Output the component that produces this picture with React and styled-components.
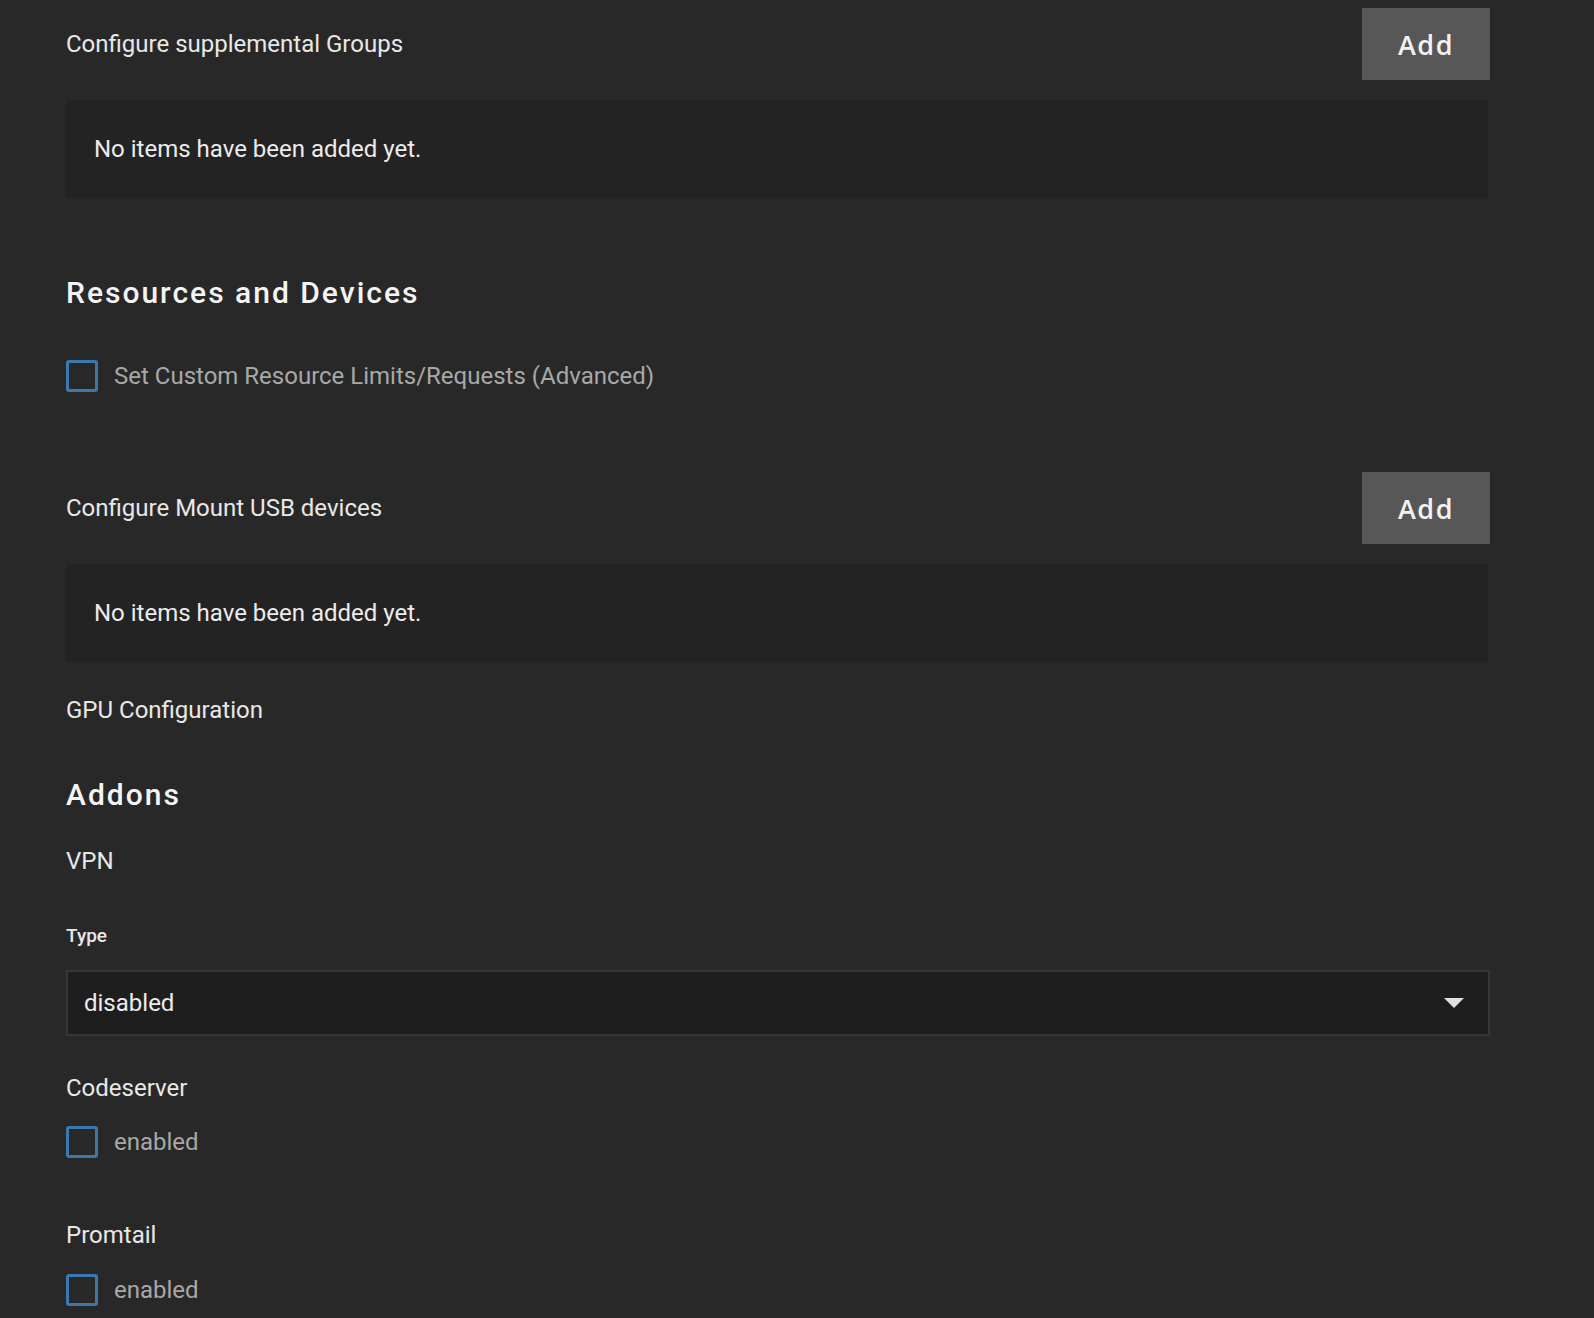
import React from "react";
import styled, { createGlobalStyle } from "styled-components";

const GlobalStyle = createGlobalStyle`
  html, body {
    margin: 0;
    padding: 0;
    background: #282828;
  }
  body {
    font-family: Roboto, "Liberation Sans", sans-serif;
    color: #e8e8e8;
  }
`;

const Page = styled.div`
  width: 1424px;
  padding: 8px 0 40px 66px;
  display: flex;
  flex-direction: column;
`;

const ListHeader = styled.div`
  display: flex;
  align-items: center;
  justify-content: space-between;
  height: 72px;
  margin-top: ${p => p.$top || 0}px;
`;

const Label = styled.div`
  font-size: 24px;
  line-height: 28px;
  color: #e8e8e8;
  margin-top: ${p => p.$top || 0}px;
`;

const SmallLabel = styled.div`
  font-size: 19px;
  line-height: 24px;
  font-weight: 500;
  color: #e8e8e8;
  margin-top: ${p => p.$top || 0}px;
`;

const AddButton = styled.button`
  width: 128px;
  height: 72px;
  border: none;
  border-radius: 0;
  background: #575757;
  color: #f2f2f2;
  font-family: "Open Sans", "Noto Sans", sans-serif;
  font-weight: 600;
  font-size: 27px;
  letter-spacing: 1.5px;
  cursor: pointer;
`;

const EmptyPanel = styled.div`
  margin: 20px 2px 0 0;
  height: 98px;
  background: #232323;
  display: flex;
  align-items: center;
  padding-left: 28px;
  font-size: 24px;
  color: #ececec;
`;

const Heading = styled.h2`
  margin: ${p => p.$top || 0}px 0 0;
  font-size: 30px;
  line-height: 36px;
  font-weight: 500;
  letter-spacing: 2px;
  color: #f4f4f4;
`;

const CheckRow = styled.label`
  display: flex;
  align-items: center;
  gap: 16px;
  height: 32px;
  margin-top: ${p => p.$top || 0}px;
  cursor: pointer;
`;

const Box = styled.span`
  box-sizing: border-box;
  width: 32px;
  height: 32px;
  border: 3px solid #3a78ad;
  border-radius: 3px;
`;

const CheckText = styled.span`
  font-size: 24px;
  color: #a8a8a8;
`;

const Select = styled.div`
  margin-top: ${p => p.$top || 0}px;
  box-sizing: border-box;
  height: 66px;
  background: #1e1e1e;
  border: 2px solid #363636;
  display: flex;
  align-items: center;
  justify-content: space-between;
  padding: 0 24px 0 16px;
  font-size: 24px;
  color: #ececec;
`;

const Arrow = styled.svg`
  width: 20px;
  height: 10px;
`;

const Checkbox = ({ top, children }) => (
  <CheckRow $top={top}>
    <Box />
    <CheckText>{children}</CheckText>
  </CheckRow>
);

export default function App() {
  return (
    <>
      <GlobalStyle />
      <Page>
        <ListHeader>
          <Label>Configure supplemental Groups</Label>
          <AddButton>Add</AddButton>
        </ListHeader>
        <EmptyPanel>No items have been added yet.</EmptyPanel>

        <Heading $top={77}>Resources and Devices</Heading>
        <Checkbox top={49}>Set Custom Resource Limits/Requests (Advanced)</Checkbox>

        <ListHeader $top={80}>
          <Label>Configure Mount USB devices</Label>
          <AddButton>Add</AddButton>
        </ListHeader>
        <EmptyPanel>No items have been added yet.</EmptyPanel>

        <Label $top={34}>GPU Configuration</Label>

        <Heading $top={53}>Addons</Heading>
        <Label $top={34}>VPN</Label>
        <SmallLabel $top={49}>Type</SmallLabel>
        <Select $top={22}>
          <span>disabled</span>
          <Arrow viewBox="0 0 20 10">
            <path d="M0 0 L20 0 L10 10 Z" fill="#e0e0e0" />
          </Arrow>
        </Select>

        <Label $top={38}>Codeserver</Label>
        <Checkbox top={24}>enabled</Checkbox>

        <Label $top={63}>Promtail</Label>
        <Checkbox top={25}>enabled</Checkbox>
      </Page>
    </>
  );
}
